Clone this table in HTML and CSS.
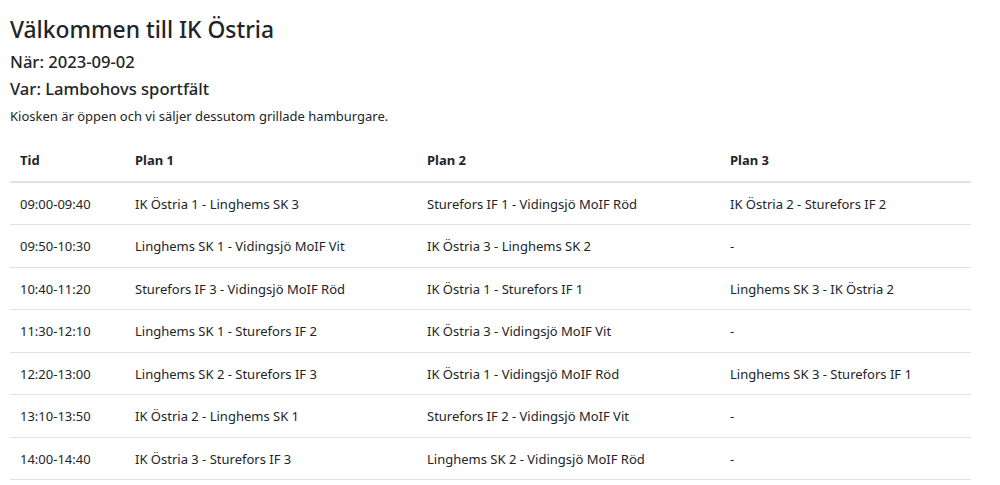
FILE: index.html
```html
<!DOCTYPE html>
<html lang="sv">
<head>
<meta charset="utf-8">
<title>Välkommen till IK Östria</title>
<link rel="stylesheet" href="styles.css">
</head>
<body>
<main class="page">
  <h1 class="title">Välkommen till IK Östria</h1>
  <h2 class="info">När: 2023-09-02</h2>
  <h2 class="info">Var: Lambohovs sportfält</h2>
  <p class="note">Kiosken är öppen och vi säljer dessutom grillade hamburgare.</p>
  <table class="schedule">
    <colgroup>
      <col class="c-time"><col class="c-p1"><col class="c-p2"><col class="c-p3">
    </colgroup>
    <thead>
      <tr><th>Tid</th><th>Plan 1</th><th>Plan 2</th><th>Plan 3</th></tr>
    </thead>
    <tbody>
      <tr><td>09:00-09:40</td><td>IK Östria 1 - Linghems SK 3</td><td>Sturefors IF 1 - Vidingsjö MoIF Röd</td><td>IK Östria 2 - Sturefors IF 2</td></tr>
      <tr><td>09:50-10:30</td><td>Linghems SK 1 - Vidingsjö MoIF Vit</td><td>IK Östria 3 - Linghems SK 2</td><td>-</td></tr>
      <tr><td>10:40-11:20</td><td>Sturefors IF 3 - Vidingsjö MoIF Röd</td><td>IK Östria 1 - Sturefors IF 1</td><td>Linghems SK 3 - IK Östria 2</td></tr>
      <tr><td>11:30-12:10</td><td>Linghems SK 1 - Sturefors IF 2</td><td>IK Östria 3 - Vidingsjö MoIF Vit</td><td>-</td></tr>
      <tr><td>12:20-13:00</td><td>Linghems SK 2 - Sturefors IF 3</td><td>IK Östria 1 - Vidingsjö MoIF Röd</td><td>Linghems SK 3 - Sturefors IF 1</td></tr>
      <tr><td>13:10-13:50</td><td>IK Östria 2 - Linghems SK 1</td><td>Sturefors IF 2 - Vidingsjö MoIF Vit</td><td>-</td></tr>
      <tr><td>14:00-14:40</td><td>IK Östria 3 - Sturefors IF 3</td><td>Linghems SK 2 - Vidingsjö MoIF Röd</td><td>-</td></tr>
    </tbody>
  </table>
</main>
</body>
</html>
```

FILE: styles.css
```css
html, body {
  margin: 0;
  padding: 0;
  background: #fff;
}
body {
  font-family: "Noto Sans", "Open Sans", sans-serif;
  color: #212529;
}
.page {
  padding: 0 10px;
}
.title {
  font-size: 22.8px;
  font-weight: 500;
  line-height: 29px;
  margin: 15px 0 0;
}
.info {
  font-size: 16.6px;
  font-weight: 500;
  line-height: 20px;
  margin: 7px 0 0;
}
.title + .info {
  margin-top: 8px;
}
.note {
  font-size: 13px;
  line-height: 21px;
  margin: 7px 0 0;
}
.schedule {
  margin-top: 12px;
  width: 961px;
  border-collapse: collapse;
  font-size: 13px;
}
.c-time { width: 115px; }
.c-p1 { width: 292px; }
.c-p2 { width: 303px; }
.c-p3 { width: 251px; }
.schedule th,
.schedule td {
  text-align: left;
  padding: 11px 10px 9px;
  line-height: 21.5px;
  vertical-align: top;
}
.schedule th {
  font-weight: 700;
  border-bottom: 2px solid #dee2e6;
}
.schedule td {
  border-bottom: 1px solid #dee2e6;
}
```
